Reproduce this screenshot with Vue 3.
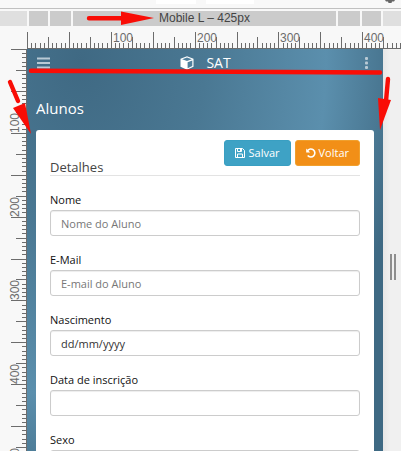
<script setup>
import { reactive } from 'vue'

const UNIT = 0.838
const ticks = Array.from({ length: 241 }, (_, i) => {
  const value = i * 5
  const length = value % 50 === 0 ? 16 : value % 25 === 0 ? 11 : 5
  return { value, at: Math.round(value * UNIT), length }
})
const labelsX = ticks.filter((t) => t.value > 0 && t.value <= 400 && t.value % 100 === 0)
const labelsY = ticks.filter((t) => t.value > 0 && t.value <= 500 && t.value % 100 === 0)

const fields = [
  { id: 'nome', label: 'Nome', placeholder: 'Nome do Aluno' },
  { id: 'email', label: 'E-Mail', placeholder: 'E-mail do Aluno' },
  { id: 'nascimento', label: 'Nascimento', placeholder: '' },
  { id: 'inscricao', label: 'Data de inscrição', placeholder: '' },
]
const form = reactive({ nome: '', email: '', nascimento: 'dd/mm/yyyy', inscricao: '', sexo: '' })
</script>

<template>
  <div class="inspector">
    <div class="toolbar">
      <span class="box box-a"></span>
      <span class="box box-b"></span>
      <svg class="gear" width="14" height="3" viewBox="0 0 14 3"><path d="M2 0h10l-1 1.500H9L8.500 3h-3L5 1.500H3z" fill="#666" /></svg>
    </div>

    <div class="breakpoints">
      <span class="bp outer start"></span>
      <span class="bp s19"></span>
      <span class="bp s21"></span>
      <span class="bp current">Mobile L – 425px</span>
      <span class="bp s22"></span>
      <span class="bp s19"></span>
      <span class="bp outer end"></span>
    </div>

    <svg class="ruler-x" aria-hidden="true">
      <g transform="translate(27 0)">
        <rect v-for="t in ticks" :key="t.value" :x="t.at" :y="21 - t.length" width="1" :height="t.length" />
        <text v-for="t in labelsX" :key="t.value" :x="t.at + 2" y="15">{{ t.value }}</text>
      </g>
      <rect x="27" y="21" width="100%" height="1" />
    </svg>

    <div class="stage">
      <svg class="ruler-y" aria-hidden="true">
        <rect v-for="t in ticks" :key="t.value" :x="27 - t.length" :y="t.at" :width="t.length" height="1" />
        <text v-for="t in labelsY" :key="t.value" :transform="`translate(19 ${t.at}) rotate(-90)`">{{ t.value }}</text>
        <rect x="26" y="0" width="1" height="100%" />
      </svg>

      <main class="page">
        <header class="navbar">
          <button class="icon-btn" type="button" aria-label="Menu">
            <svg width="13" height="12" viewBox="0 0 13 12"><path d="M0 1.500h13M0 6h13M0 10.500h13" stroke="#b9cad5" stroke-width="2" /></svg>
          </button>
          <a class="brand" href="#">
            <svg width="14" height="14" viewBox="0 0 14 14">
              <path d="M7 .3 13.500 2.800v8L7 13.800.5 10.800v-8z" fill="#fff" />
              <path d="M7 1.400 11.800 3.200 7 5 2.200 3.200z" fill="#50809d" />
              <path d="M7.600 6.200 12.300 4.400v5.700L7.600 12.300z" fill="#50809d" />
            </svg>
            <span>SAT</span>
          </a>
          <button class="icon-btn more" type="button" aria-label="Mais">
            <svg width="4" height="12" viewBox="0 0 4 12" fill="#b9cad5"><rect x="0" y="0" width="3" height="3" rx="1" /><rect x="0" y="4.500" width="3" height="3" rx="1" /><rect x="0" y="9" width="3" height="3" rx="1" /></svg>
          </button>
        </header>

        <h1>Alunos</h1>

        <form class="card" @submit.prevent>
          <div class="card-head">
            <h2>Detalhes</h2>
            <div class="actions">
              <button class="btn save" type="submit">
                <svg width="10" height="10" viewBox="0 0 10 10" fill="none" stroke="#fff"><path d="M.5.5h7l2 2v7h-9zM2.500.5v3h4v-3M2.500 9.500V6h5v3.500M5.500 1v2" /></svg>
                Salvar
              </button>
              <button class="btn back" type="button">
                <svg width="10" height="10" viewBox="0 0 10 10" fill="none" stroke="#fff" stroke-width="1.600"><path d="M1.500 2.800A4 4 0 1 1 1.700 7.500" /><path d="M.2.4v4h4z" fill="#fff" stroke="none" /></svg>
                Voltar
              </button>
            </div>
          </div>

          <div v-for="f in fields" :key="f.id" class="field">
            <label :for="f.id">{{ f.label }}</label>
            <input :id="f.id" v-model="form[f.id]" type="text" :placeholder="f.placeholder" />
          </div>
          <div class="field">
            <label for="sexo">Sexo</label>
            <select id="sexo" v-model="form.sexo">
              <option value=""></option>
            </select>
          </div>
        </form>
      </main>

      <div class="gutter"><span class="grip"></span></div>
    </div>

    <svg class="marks" width="401" height="140" viewBox="0 0 401 140" aria-hidden="true">
      <g stroke="#f90d06" stroke-width="4.400" stroke-linecap="round">
        <path d="M89 18.300H124M31 70.700 380 72.500M10 82l8 19M388 79l-2 22" />
      </g>
      <g fill="#f90d06">
        <path d="M121 11.500 154 18 121 25z" />
        <path d="M13 108 25 103 31 134z" />
        <path d="M378 98 391 100 380 130z" />
      </g>
    </svg>
  </div>
</template>

<style>
body {
  margin: 0;
  overflow: hidden;
}
</style>

<style scoped>
.inspector {
  position: relative;
  display: flex;
  flex-direction: column;
  height: 100vh;
  overflow: hidden;
  background: #f8f8f8;
  font-family: "Open Sans", "Noto Sans", sans-serif;
}
.toolbar {
  display: flex;
  align-items: flex-start;
  box-sizing: border-box;
  height: 9px;
  flex: none;
  gap: 10px;
  padding: 0 4px 0 156px;
  border-bottom: 1px solid #c0c0c0;
}
.box {
  height: 4px;
  background: #fff;
}
.box-a {
  width: 40px;
}
.box-b {
  width: 48px;
}
.gear {
  margin-left: auto;
}
.breakpoints {
  display: flex;
  flex: none;
  gap: 2px;
  height: 15px;
  padding: 2px 0 1px;
}
.bp {
  background: #cbcbcb;
}
.outer {
  background: #dfdfdf;
}
.start {
  width: 27px;
}
.end {
  width: 18px;
}
.s19 {
  width: 19px;
}
.s21 {
  width: 21px;
}
.s22 {
  width: 22px;
}
.current {
  flex: 1;
  text-align: center;
  font: 12px/15px "Liberation Sans", sans-serif;
  color: #444;
}
.ruler-x {
  display: block;
  flex: none;
  width: 100%;
  height: 22px;
}
.ruler-y {
  flex: none;
  width: 27px;
  height: 100%;
}
.ruler-x,
.ruler-y {
  fill: #6c6c6c;
  font: 12px "Liberation Sans", sans-serif;
}
.stage {
  display: flex;
  flex: 1;
  min-height: 0;
}
.page {
  flex: 1;
  min-width: 0;
  overflow: hidden;
  background: radial-gradient(ellipse 100% 122% at 15% 3%, #3f6983 0%, #4a7893 35%, #5b8fad 69%, #4a7893 84%, #3e6983 92%, #3e6983 100%);
}
.navbar {
  display: flex;
  align-items: center;
  justify-content: space-between;
  height: 27px;
  padding: 0 14px 0 10px;
}
.icon-btn {
  display: flex;
  padding: 0;
  border: 0;
  background: none;
}
.more {
  justify-content: flex-end;
  width: 8px;
}
.brand {
  display: flex;
  align-items: center;
  gap: 12px;
  color: #fff;
  font-size: 14px;
  font-weight: 500;
  line-height: 20px;
  text-decoration: none;
}
h1 {
  margin: 20px 0 10px;
  padding-left: 9px;
  color: #fff;
  font-size: 15px;
  font-weight: 400;
  line-height: 24px;
}
.card {
  margin: 0 9px;
  padding: 10px 14px;
  border-radius: 3px;
  background: #fff;
}
.card-head {
  display: flex;
  align-items: flex-end;
  justify-content: space-between;
  height: 35px;
  border-bottom: 1px solid #e3e3e3;
}
h2 {
  margin: 0;
  color: #444;
  font-size: 13px;
  font-weight: 400;
  line-height: 16px;
}
.actions {
  display: flex;
  align-self: flex-start;
  gap: 4px;
}
.btn {
  display: flex;
  align-items: center;
  justify-content: center;
  gap: 3px;
  box-sizing: border-box;
  height: 26px;
  padding: 0 10px;
  border: 1px solid;
  border-radius: 3px;
  color: #fff;
  font: 500 11px/16px "Open Sans", "Noto Sans", sans-serif;
}
.save {
  border-color: #399fc2;
  background: #3ea2c5;
}
.back {
  border-color: #f0a02e;
  background: #f28f17;
}
.field {
  display: flex;
  flex-direction: column;
  gap: 2px;
  padding-top: 16px;
}
label {
  color: #111;
  font-size: 11px;
  line-height: 16px;
}
input,
select {
  box-sizing: border-box;
  width: 100%;
  height: 26px;
  padding: 0 10px;
  border: 1px solid #ccc;
  border-radius: 3px;
  background: #fff;
  box-shadow: inset 0 1px 1px #00000013;
  color: #333;
  font: 11px "Open Sans", "Noto Sans", sans-serif;
}
input::placeholder {
  color: #777;
  opacity: 1;
}
.gutter {
  display: flex;
  flex: none;
  justify-content: center;
  align-items: flex-start;
  box-sizing: border-box;
  width: 18px;
  padding-top: 205px;
  background: linear-gradient(90deg, #e6e6e6, #f0f0f0 40%);
}
.grip {
  width: 2px;
  height: 26px;
  border: solid #8e8e8e;
  border-width: 0 2px;
  margin-left: 2px;
}
.marks {
  position: absolute;
  top: 0;
  left: 0;
  pointer-events: none;
}
</style>
